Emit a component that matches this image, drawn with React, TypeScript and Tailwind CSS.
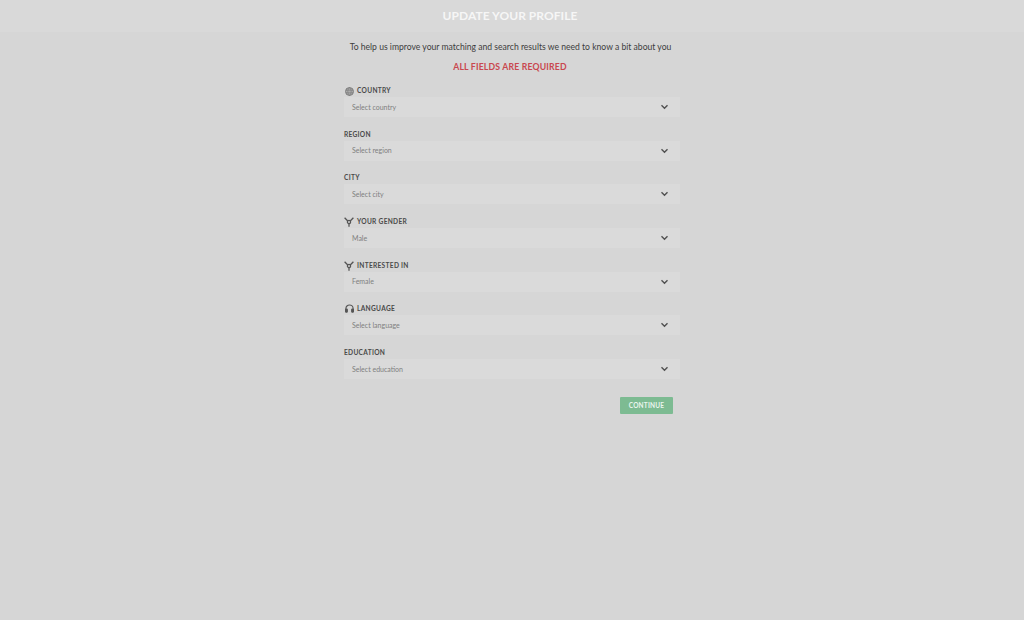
import React from "react";

const Chevron = () => (
  <svg width="9" height="6" viewBox="0 0 10 7" fill="none" stroke="#505050" strokeWidth="1.6">
    <path d="M1.5 1.5 L5 5 L8.5 1.5" />
  </svg>
);

const Globe = () => (
  <svg width="9" height="9" viewBox="0 0 10 10" fill="none" stroke="#777" strokeWidth="1">
    <circle cx="5" cy="5" r="4.4" fill="#adadad" />
    <path d="M0.8 3.5H9.2M0.8 6.5H9.2M5 0.6C2.5 3.5 2.5 6.5 5 9.4M5 0.6C7.5 3.5 7.5 6.5 5 9.4" strokeWidth="0.7" />
  </svg>
);

const Gender = () => (
  <svg width="10" height="10" viewBox="0 0 10 10" fill="none" stroke="#555" strokeWidth="1.3">
    <path d="M0.6 0.8 L3.8 4 M9.4 0.8 L6.2 4" />
    <circle cx="5" cy="5" r="1.6" />
    <path d="M5 6.6V9.8" />
  </svg>
);

const Headset = () => (
  <svg width="9" height="10" viewBox="0 0 10 11" fill="none" stroke="#555" strokeWidth="1.2">
    <path d="M1 7V5a4 4 0 0 1 8 0v2" />
    <rect x="0.6" y="5.6" width="2" height="3.6" rx="0.8" fill="#555" />
    <rect x="7.4" y="5.6" width="2" height="3.6" rx="0.8" fill="#555" />
  </svg>
);

const fields: { label: string; value: string; icon?: React.ReactNode }[] = [
  { label: "COUNTRY", value: "Select country", icon: <Globe /> },
  { label: "REGION", value: "Select region" },
  { label: "CITY", value: "Select city" },
  { label: "YOUR GENDER", value: "Male", icon: <Gender /> },
  { label: "INTERESTED IN", value: "Female", icon: <Gender /> },
  { label: "LANGUAGE", value: "Select language", icon: <Headset /> },
  { label: "EDUCATION", value: "Select education" },
];

export default function App() {
  return (
    <div className="min-h-[620px] bg-[#d6d6d6] font-['Lato',sans-serif]">
      <header className="h-[32px] bg-[#d9d9d9] flex items-center justify-center pr-[4px]">
        <h1 className="text-[12px] font-bold tracking-[0.05px] text-[#f6f6f6]">UPDATE YOUR PROFILE</h1>
      </header>
      <main className="w-[336px] mx-auto">
        <p className="mt-[8px] pr-[3px] h-[14px] leading-[14px] text-center text-[8.6px] text-[#3d3d3d] whitespace-nowrap">
          To help us improve your matching and search results we need to know a bit about you
        </p>
        <p className="mt-[6px] pr-[4px] h-[14px] leading-[14px] text-center text-[8.7px] font-bold tracking-[0.18px] text-[#c9474f]">
          ALL FIELDS ARE REQUIRED
        </p>
        <div className="mt-[10px] flex flex-col gap-[10.67px]">
          {fields.map((f) => (
            <div key={f.label}>
              <div className="h-[13px] pt-[1px] flex items-center gap-[3px] text-[6.6px] font-bold tracking-[0.3px] text-[#4a4a4a]">
                {f.icon && <span className="w-[10px] flex justify-center">{f.icon}</span>}
                <span>{f.label}</span>
              </div>
              <div className="h-[20px] bg-[#dadada] pl-[8px] pr-[11px] flex items-center justify-between text-[7px] text-[#7f7f7f]">
                <span>{f.value}</span>
                <Chevron />
              </div>
            </div>
          ))}
        </div>
        <div className="mt-[18px] pr-[7px] flex justify-end">
          <button className="w-[53px] h-[17px] bg-[#7dbb92] text-[6.5px] font-bold tracking-[0.2px] text-[#eaf5ee] rounded-[1px]">
            CONTINUE
          </button>
        </div>
      </main>
    </div>
  );
}
